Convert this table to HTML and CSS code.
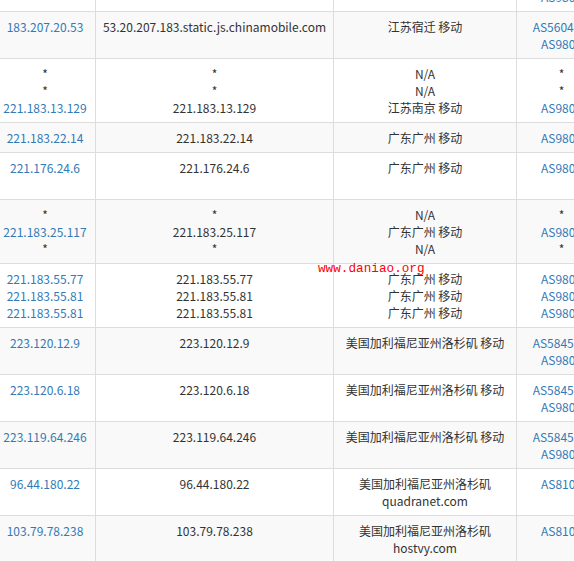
FILE: index.html
```html
<!DOCTYPE html>
<html lang="zh-CN">
<head>
<meta charset="utf-8">
<title>Traceroute</title>
<link rel="stylesheet" href="styles.css">
</head>
<body>
<div class="wrap">
  <table class="trace">
    <colgroup>
      <col class="c-ip"><col class="c-host"><col class="c-loc"><col class="c-as"><col class="c-extra">
    </colgroup>
    <tbody>
      <tr>
        <td><a>*</a></td><td>*</td><td>N/A</td><td><a class="as-wide">AS56040</a><br><a>AS9808</a></td><td>1 ms</td>
      </tr>
      <tr>
        <td><a>183.207.20.53</a></td><td>53.20.207.183.static.js.chinamobile.com</td><td>江苏宿迁 移动</td><td><a class="as-wide">AS56040</a><br><a>AS9808</a></td><td>2 ms</td>
      </tr>
      <tr>
        <td><span class="star">*</span><br><span class="star">*</span><br><a>221.183.13.129</a></td><td>*<br>*<br>221.183.13.129</td><td>N/A<br>N/A<br>江苏南京 移动</td><td><span class="star">*</span><br><span class="star">*</span><br><a>AS9808</a></td><td>*<br>*<br>5 ms</td>
      </tr>
      <tr>
        <td><a>221.183.22.14</a></td><td>221.183.22.14</td><td>广东广州 移动</td><td><a>AS9808</a></td><td>25 ms</td>
      </tr>
      <tr>
        <td><a>221.176.24.6</a></td><td>221.176.24.6</td><td>广东广州 移动</td><td><a>AS9808</a></td><td>26 ms<br>china</td>
      </tr>
      <tr>
        <td><span class="star">*</span><br><a>221.183.25.117</a><br><span class="star">*</span></td><td>*<br>221.183.25.117<br>*</td><td>N/A<br>广东广州 移动<br>N/A</td><td><span class="star">*</span><br><a>AS9808</a><br><span class="star">*</span></td><td>*<br>27 ms<br>*</td>
      </tr>
      <tr>
        <td><a>221.183.55.77</a><br><a>221.183.55.81</a><br><a>221.183.55.81</a></td><td>221.183.55.77<br>221.183.55.81<br>221.183.55.81</td><td>广东广州 移动<br>广东广州 移动<br>广东广州 移动</td><td><a>AS9808</a><br><a>AS9808</a><br><a>AS9808</a></td><td>28 ms<br>28 ms<br>28 ms</td>
      </tr>
      <tr>
        <td><a>223.120.12.9</a></td><td>223.120.12.9</td><td>美国加利福尼亚州洛杉矶 移动</td><td><a class="as-wide">AS58453</a><br><a>AS9808</a></td><td>180 ms</td>
      </tr>
      <tr>
        <td><a>223.120.6.18</a></td><td>223.120.6.18</td><td>美国加利福尼亚州洛杉矶 移动</td><td><a class="as-wide">AS58453</a><br><a>AS9808</a></td><td>181 ms</td>
      </tr>
      <tr>
        <td><a>223.119.64.246</a></td><td>223.119.64.246</td><td>美国加利福尼亚州洛杉矶 移动</td><td><a class="as-wide">AS58453</a><br><a>AS9808</a></td><td>182 ms</td>
      </tr>
      <tr>
        <td><a>96.44.180.22</a></td><td>96.44.180.22</td><td>美国加利福尼亚州洛杉矶<br>quadranet.com</td><td><a>AS8100</a></td><td>183 ms</td>
      </tr>
      <tr>
        <td><a>103.79.78.238</a></td><td>103.79.78.238</td><td>美国加利福尼亚州洛杉矶<br>hostvy.com</td><td><a>AS8100</a></td><td>184 ms</td>
      </tr>
    </tbody>
  </table>
  <div class="watermark">www.daniao.org</div>
</div>
</body>
</html>
```
FILE: styles.css
```css
html, body {
  margin: 0;
  padding: 0;
  background: #fff;
}

.wrap {
  position: relative;
  width: 574px;
  height: 561px;
  overflow: hidden;
}

.trace {
  border-collapse: collapse;
  table-layout: fixed;
  width: 707px;
  margin-top: -36px;
  margin-left: -1px;
  font-family: "Noto Sans CJK SC", "Noto Sans", sans-serif;
  font-size: 12px;
  line-height: 17px;
  color: #333;
}

.c-ip { width: 96px; }
.c-host { width: 238px; }
.c-loc { width: 183px; }
.c-as { width: 90px; }
.c-extra { width: 100px; }

.trace td {
  border: 1px solid #ddd;
  padding: 6px 4px;
  text-align: center;
  vertical-align: top;
  white-space: nowrap;
  overflow: hidden;
}

.trace td:first-child {
  padding-left: 2px;
  padding-right: 7px;
}

.trace tr:nth-child(even) td {
  background: #f9f9f9;
}

.trace a {
  color: #337ab7;
  text-decoration: none;
}

.trace .as-wide {
  display: inline-block;
  padding-right: 10px;
}

.star {
  color: #333;
}

.watermark {
  position: absolute;
  left: 318px;
  top: 261px;
  font-family: "Liberation Mono", "DejaVu Sans Mono", monospace;
  font-size: 12.7px;
  line-height: 15px;
  color: #ff0000;
  white-space: nowrap;
}
```
